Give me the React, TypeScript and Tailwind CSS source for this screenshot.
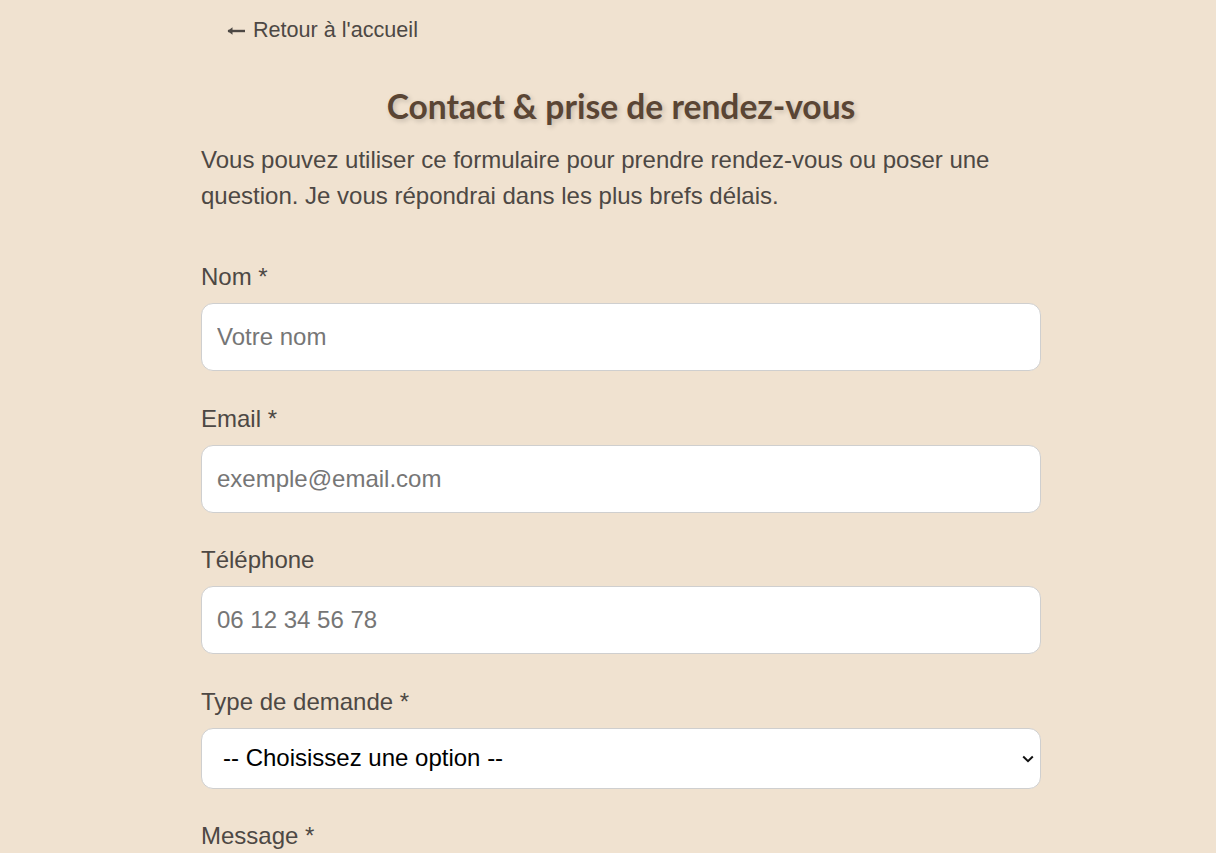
import React, { useState } from 'react';

const bodyFont = "font-['Liberation_Sans',Arial,sans-serif]";

interface FieldProps {
  id: string;
  label: string;
  type?: string;
  placeholder: string;
  value: string;
  onChange: (value: string) => void;
}

const Field: React.FC<FieldProps> = ({ id, label, type = 'text', placeholder, value, onChange }) => (
  <div className="flex flex-col gap-[8px] mb-[29.5px]">
    <label htmlFor={id} className="text-[24px] leading-[36px] text-[#4d4844]">
      {label}
    </label>
    <input
      id={id}
      type={type}
      value={value}
      onChange={(e) => onChange(e.target.value)}
      placeholder={placeholder}
      className="h-[68px] w-full rounded-[12px] border border-[#cfcfcf] bg-white px-[15px] text-[24px] text-[#333] placeholder:text-[#767676] outline-none"
    />
  </div>
);

export default function App() {
  const [formData, setFormData] = useState({
    name: '',
    email: '',
    phone: '',
    type: '',
    message: ''
  });

  const handleInputChange = (field: string, value: string) => {
    setFormData(prev => ({ ...prev, [field]: value }));
  };

  return (
    <div className={`min-h-[853px] bg-[#f0e2d0] ${bodyFont}`}>
      <div className="flex justify-center pl-[26px]">
        <div className="w-[840px]">
          {/* Back link */}
          <div className="pt-[14px] pl-[26px]">
            <a href="#" className="inline-flex items-center gap-[8px] text-[21.6px] leading-[32px] text-[#4d4844]">
              <svg width="18" height="10" viewBox="0 0 18 10" className="mt-[1px]">
                <path d="M1 5h17" stroke="#4d4844" strokeWidth="2.4" />
                <path d="M0.5 5L5.5 1.2V8.8Z" fill="#4d4844" />
              </svg>
              Retour à l'accueil
            </a>
          </div>

          <h1 className="mt-[40px] text-center font-['Lato',sans-serif] text-[33.6px] font-bold leading-[40px] text-[#5a4534] [text-shadow:2px_2px_5px_rgba(0,0,0,0.18)]">
            Contact &amp; prise de rendez-vous
          </h1>

          <p className="mt-[16px] text-[24px] leading-[36px] text-[#4d4844]">
            Vous pouvez utiliser ce formulaire pour prendre rendez-vous ou poser une question. Je vous répondrai dans les plus brefs délais.
          </p>

          <form className="mt-[45px]" onSubmit={(e) => e.preventDefault()}>
            <Field
              id="name"
              label="Nom *"
              placeholder="Votre nom"
              value={formData.name}
              onChange={(v) => handleInputChange('name', v)}
            />
            <Field
              id="email"
              label="Email *"
              type="email"
              placeholder="exemple@email.com"
              value={formData.email}
              onChange={(v) => handleInputChange('email', v)}
            />
            <Field
              id="phone"
              label="Téléphone"
              type="tel"
              placeholder="06 12 34 56 78"
              value={formData.phone}
              onChange={(v) => handleInputChange('phone', v)}
            />

            <div className="flex flex-col gap-[8px] mb-[29.5px]">
              <label htmlFor="type" className="text-[24px] leading-[36px] text-[#4d4844]">
                Type de demande *
              </label>
              <div className="relative">
                <select
                  id="type"
                  value={formData.type}
                  onChange={(e) => handleInputChange('type', e.target.value)}
                  className="h-[61px] w-full appearance-none rounded-[12px] border border-[#cfcfcf] bg-white pl-[21px] pr-[40px] text-[24px] text-black outline-none"
                >
                  <option value="">-- Choisissez une option --</option>
                  <option value="rdv">Prise de rendez-vous</option>
                  <option value="question">Question</option>
                </select>
                <svg
                  width="12"
                  height="8"
                  viewBox="0 0 12 8"
                  className="pointer-events-none absolute right-[7px] top-[27px]"
                >
                  <path d="M1.2 1.5L6 6.2L10.8 1.5" fill="none" stroke="#111" strokeWidth="2" />
                </svg>
              </div>
            </div>

            <div className="flex flex-col gap-[8px]">
              <label htmlFor="message" className="text-[24px] leading-[36px] text-[#4d4844]">
                Message *
              </label>
              <textarea
                id="message"
                rows={5}
                value={formData.message}
                onChange={(e) => handleInputChange('message', e.target.value)}
                placeholder="Votre message"
                className="w-full rounded-[12px] border border-[#cfcfcf] bg-white px-[15px] py-[14px] text-[24px] placeholder:text-[#767676] outline-none"
              />
            </div>
          </form>
        </div>
      </div>
    </div>
  );
}
